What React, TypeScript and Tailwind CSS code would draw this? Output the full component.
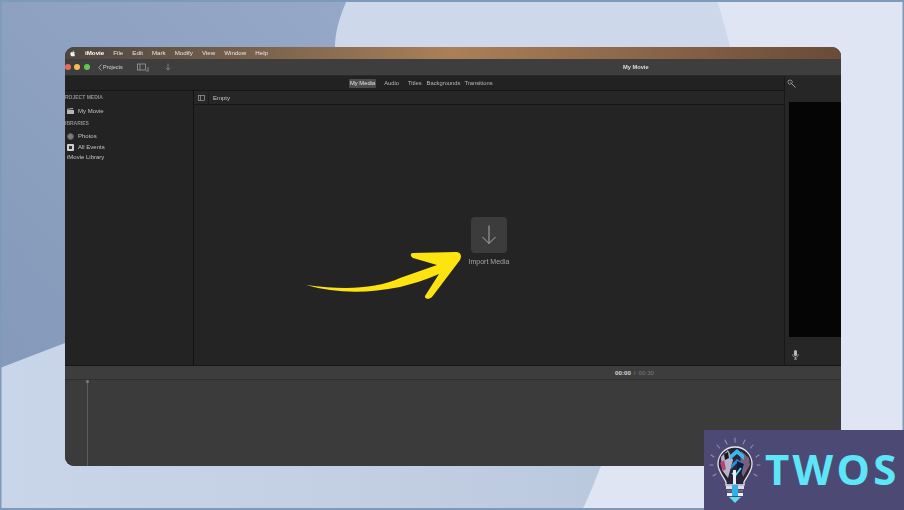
import React from "react";

const menu = ["File", "Edit", "Mark", "Modify", "View", "Window", "Help"];

function Backdrop() {
  return (
    <svg className="absolute inset-0" width="904" height="510" viewBox="0 0 904 510">
      <defs>
        <linearGradient id="bl" x1="0" y1="1" x2="1" y2="0">
          <stop offset="0" stopColor="#8599ba" />
          <stop offset="1" stopColor="#95a8c7" />
        </linearGradient>
        <linearGradient id="mid" x1="0" y1="0" x2="1" y2="0">
          <stop offset="0" stopColor="#c9d6e9" />
          <stop offset="0.5" stopColor="#c2cfe3" />
          <stop offset="0.85" stopColor="#b9c7dd" />
        </linearGradient>
      </defs>
      <rect width="904" height="510" fill="#dfe5f2" />
      <path d="M0 300H760C760 350 640 400 601 466C595 480 590 495 582 510H0Z" fill="url(#mid)" />
      <path d="M300 0H717C735 60 760 150 760 300H300Z" fill="#cdd8ea" />
      <path d="M0 0H347C338 20 335 35 335 47V300L65 343L0 368Z" fill="url(#bl)" />
      <rect x="0" y="0" width="904" height="2" fill="#7d9abb" />
      <rect x="0" y="0" width="1.500" height="510" fill="#7d9abb" />
      <rect x="0" y="508" width="904" height="2" fill="#7d9abb" />
      <rect x="902.500" y="0" width="1.500" height="510" fill="#7d9abb" />
    </svg>
  );
}

function Arrow() {
  return (
    <svg className="absolute left-[305px] top-[250px]" width="160" height="52" viewBox="305 250 160 52">
      <path
        d="M306 285C345 290 375 289 400 278L437 265L413 258C410 256 410 253 413 253L456 252C461 252 462 256 460 260L432 297C429 300 424 299 425 296L439 274C425 280 412 284 400 287C365 294 335 293 306 285Z"
        fill="#fde30f"
      />
    </svg>
  );
}

function Bulb() {
  return (
    <svg width="56" height="76" viewBox="0 0 56 76" className="shrink-0">
      <g stroke="#8f8fb3" strokeWidth="1.100" strokeLinecap="round">
        <path d="M28 6V10M18 8L20 12M38 8L36 12M10 13L12.500 16M46 13L43.500 16M4 23L7 25M52 23L49 25M3 33H6M50 33H53M6 44L9 42M47 42L50 44" />
      </g>
      <path d="M28 15C18 15 11 23 11 32C11 39 16 44 19 50V53H37V50C40 44 45 39 45 32C45 23 38 15 28 15Z" fill="#2a2438" stroke="#e6e6ee" strokeWidth="1.300" />
      <path d="M14 25L21 18L26 28L21 46L15 38Z" fill="#b9b3c8" />
      <path d="M13 31L17 28L19 37L16 39Z" fill="#b9427a" />
      <path d="M17 22L21 20L22 26L18 28Z" fill="#1a1626" />
      <path d="M34 19L42 26L43 33L36 45L33 36Z" fill="#77607a" />
      <path d="M23 23L30 17L37 23V28L30 22L23 28Z" fill="#39b8ee" />
      <path d="M24 33L30 27L37 32V36L30 31L24 37Z" fill="#2b8fdb" />
      <path d="M30 29L37 32L34 42L30 41Z" fill="#101a3e" />
      <path d="M25 41L28 44L34 36" fill="none" stroke="#63e4f6" strokeWidth="1.700" />
      <path d="M26 38H29V52H26Z" fill="#e9edf5" />
      <path d="M19 54H37V57H19Z" fill="#dcdde8" />
      <path d="M20 58H36V60H20Z" fill="#6a6580" />
      <path d="M20 61H36V64H20Z" fill="#eef0f6" />
      <path d="M25 53H31V64H25Z" fill="#36aee8" />
      <path d="M22 65H34L28 71Z" fill="#5ddcf0" />
    </svg>
  );
}

export default function App() {
  return (
    <div
      className="relative w-[904px] h-[510px] overflow-hidden"
      style={{ fontFamily: '"Liberation Sans", Arial, sans-serif' }}
    >
      <Backdrop />

      <div className="relative pl-[65px] pt-[47px] blur-[0.4px]">
        <div className="w-[776px] h-[419px] rounded-[9px] overflow-hidden flex flex-col bg-[#3a3a3a]">
          {/* menu bar */}
          <div className="h-[12px] shrink-0 flex items-center gap-[9px] pl-[5px] text-[6.2px] text-[#e8e4de] bg-gradient-to-r from-[#4d4640] via-[#ab8058] to-[#6a4b38]">
            <svg width="6" height="7" viewBox="0 0 24 24" fill="#f2f2f2">
              <path d="M17 12.500c0-3 2.400-4.300 2.500-4.400-1.400-2-3.500-2.300-4.200-2.300-1.800-.2-3.500 1.100-4.400 1.100-.9 0-2.300-1-3.800-1-2 0-3.800 1.100-4.800 2.900-2 3.600-.5 8.800 1.500 11.700 1 1.400 2.200 3 3.700 2.900 1.500-.1 2-.9 3.800-.9s2.300.9 3.800.9c1.600 0 2.600-1.400 3.600-2.900 1.100-1.600 1.600-3.200 1.600-3.300-.1 0-3.100-1.200-3.100-4.700zM14.100 3.800c.8-1 1.400-2.400 1.200-3.800-1.200.1-2.600.8-3.500 1.800-.8.9-1.400 2.300-1.200 3.700 1.300.1 2.700-.7 3.500-1.700z" />
            </svg>
            <span className="font-bold text-white">iMovie</span>
            {menu.map((m) => (
              <span key={m}>{m}</span>
            ))}
          </div>

          {/* toolbar */}
          <div className="h-[17px] shrink-0 flex items-center bg-[#3e3e3e] border-b border-[#2a2a2a] text-[5.5px] text-[#d4d4d4]">
            <div className="flex items-center gap-[3.500px] w-[33px] -ml-[0.500px] mr-[0.500px]">
              <span className="w-[6px] h-[6px] shrink-0 rounded-full bg-[#ec6a5e]" />
              <span className="w-[6px] h-[6px] shrink-0 rounded-full bg-[#f4bf4f]" />
              <span className="w-[6px] h-[6px] shrink-0 rounded-full bg-[#61c554]" />
            </div>
            <span className="w-[39px] flex items-center gap-[1px]">
              <svg width="4" height="7" viewBox="0 0 4 7" fill="none" stroke="#c8c8c8" strokeWidth="0.700">
                <path d="M3.500 0.500L0.700 3.500L3.500 6.500" />
              </svg>
              Projects
            </span>
            <svg width="13" height="9" viewBox="0 0 13 9" fill="none" stroke="#9a9a9a" strokeWidth="0.800" className="mr-[15px]">
              <rect x="0.500" y="1" width="8" height="6" />
              <path d="M3 1V7M9 8H11.500M11 8V4" />
            </svg>
            <svg width="6" height="8" viewBox="0 0 6 8" fill="none" stroke="#8a8a8a" strokeWidth="0.800">
              <path d="M3 0.500V7M0.800 4.800L3 7L5.200 4.800" />
            </svg>
            <span className="ml-[452px] text-[5.7px] font-bold text-[#dedede]">My Movie</span>
          </div>

          {/* main area */}
          <div className="h-[290px] shrink-0 flex bg-[#222222] border-b border-[#161616]">
            <div className="w-[720px] shrink-0 flex flex-col border-r border-[#181818]">
              <div className="h-[15px] shrink-0 flex items-center pl-[284px] pt-[1px] text-[5.8px] text-[#b9b9b9] bg-[#222222] border-b border-[#161616]">
                <span className="bg-[#4c4c4c] text-[#e4e4e4] px-[1px] rounded-[1px]">My Media</span>
                <span className="ml-[8px]">Audio</span>
                <span className="ml-[9px]">Titles</span>
                <span className="ml-[5px]">Backgrounds</span>
                <span className="ml-[4px]">Transitions</span>
              </div>
              <div className="flex-1 flex min-h-0">
                <div className="w-[129px] shrink-0 border-r border-[#131313] text-[6px] text-[#c4c4c4] bg-[#232323]">
                  <div className="h-[13px] flex items-center text-[5px] font-bold text-[#8e8e8e] pt-[1px]">ROJECT MEDIA</div>
                  <div className="h-[14px] flex items-center pl-[2px] gap-[4px]">
                    <svg width="7" height="6" viewBox="0 0 7 6" fill="#b5b5b5">
                      <path d="M0 2H7V6H0ZM0 .8L6 0L6.200 1L0 1.700Z" />
                    </svg>
                    <span>My Movie</span>
                  </div>
                  <div className="h-[11px] flex items-center text-[5px] font-bold text-[#8e8e8e]">IBRARIES</div>
                  <div className="h-[11px] flex items-center pl-[2px] gap-[4px] mt-[2px]">
                    <span className="w-[7px] h-[7px] rounded-full bg-[#7d7d7d] border border-[#5a5a5a]" />
                    <span>Photos</span>
                  </div>
                  <div className="h-[10.500px] flex items-center pl-[2px] gap-[4px]">
                    <span className="w-[7px] h-[7px] rounded-[1px] bg-[#cfcfcf] flex items-center justify-center">
                      <span className="w-[3px] h-[3px] bg-[#333]" />
                    </span>
                    <span>All Events</span>
                  </div>
                  <div className="h-[10.500px] flex items-center pl-[2px]">iMovie Library</div>
                </div>
                <div className="flex-1 flex flex-col min-w-0">
                  <div className="h-[14px] shrink-0 flex items-center bg-[#262626] border-b border-[#171717] text-[6px] text-[#c8c8c8] pt-[1px]">
                    <div className="w-[15px] h-full flex items-center justify-center border-r border-[#1d1d1d]">
                      <svg width="7" height="6" viewBox="0 0 7 6" fill="none" stroke="#a0a0a0" strokeWidth="0.700">
                        <rect x="0.400" y="0.400" width="6.200" height="5.200" />
                        <path d="M2.500 0.400V5.600" />
                      </svg>
                    </div>
                    <span className="ml-[4px]">Empty</span>
                  </div>
                  <div className="flex-1 flex flex-col items-center bg-[#242424] pt-[112px]">
                    <div className="w-[36px] h-[36px] rounded-[4px] bg-[#3c3c3c] flex items-center justify-center">
                      <svg width="16" height="20" viewBox="0 0 16 20" fill="none" stroke="#a9a9a9" strokeWidth="1">
                        <path d="M8 0.500V18.500M1.500 12L8 18.500L14.500 12" />
                      </svg>
                    </div>
                    <span className="mt-[4px] text-[7px] text-[#a4a4a4]">Import Media</span>
                  </div>
                </div>
              </div>
            </div>

            {/* viewer */}
            <div className="flex-1 flex flex-col min-w-0 bg-[#262626]">
              <div className="h-[26px] shrink-0 pl-[2px] pt-[3px] flex items-start">
                <svg width="9" height="9" viewBox="0 0 9 9" fill="none" stroke="#bdbdbd" strokeWidth="0.800">
                  <path d="M3.500 3.500L8.500 8.500M3 0.500V2M3 4.500V6M0.500 3H2M4.500 3H6M1.200 1.200L2 2M4.800 1.200L4 2M1.200 4.800L2 4" />
                </svg>
              </div>
              <div className="h-[235px] shrink-0 ml-[4px] bg-[#050505]" />
              <div className="flex-1 pl-[7px] pt-[13px]">
                <svg width="7" height="10" viewBox="0 0 7 10" fill="#b9b9b9">
                  <rect x="2" y="0" width="3" height="6" rx="1.500" />
                  <path d="M0.800 4V4.800C0.800 6.200 2 7.300 3.500 7.300S6.200 6.200 6.200 4.800V4" fill="none" stroke="#b9b9b9" strokeWidth="0.700" />
                  <path d="M3.100 7.300H3.900V8.800H5V9.500H2V8.800H3.100Z" />
                </svg>
              </div>
            </div>
          </div>

          {/* timecode */}
          <div className="h-[14px] shrink-0 flex items-center pl-[550px] bg-[#3d3d3d] border-b border-[#2f2f2f] text-[6.200px]">
            <span className="text-[#d5d5d5] font-bold">00:00</span>
            <span className="text-[#8a8a8a] ml-[3px]">/</span>
            <span className="text-[#7a7a7a] ml-[3px]">00:30</span>
          </div>

          {/* timeline */}
          <div className="flex-1 relative bg-[#3b3b3b] pl-[22px]">
            <div className="w-[1px] h-full bg-[#5c5c5c]" />
            <span className="absolute left-[21px] top-0 w-[3px] h-[3px] rounded-full bg-[#7d7d7d]" />
          </div>
        </div>
      </div>

      <Arrow />

      {/* logo badge */}
      <div className="absolute right-0 bottom-0 w-[200px] h-[80px] bg-[#4c4a74] flex items-center pl-[3px] gap-[2px]">
        <Bulb />
        <span
          className="text-[#5ce6f7] text-[42px] leading-none font-bold tracking-[3.300px] -mt-[3px]"
          style={{ fontFamily: '"Open Sans", sans-serif' }}
        >
          TWOS
        </span>
      </div>
    </div>
  );
}
